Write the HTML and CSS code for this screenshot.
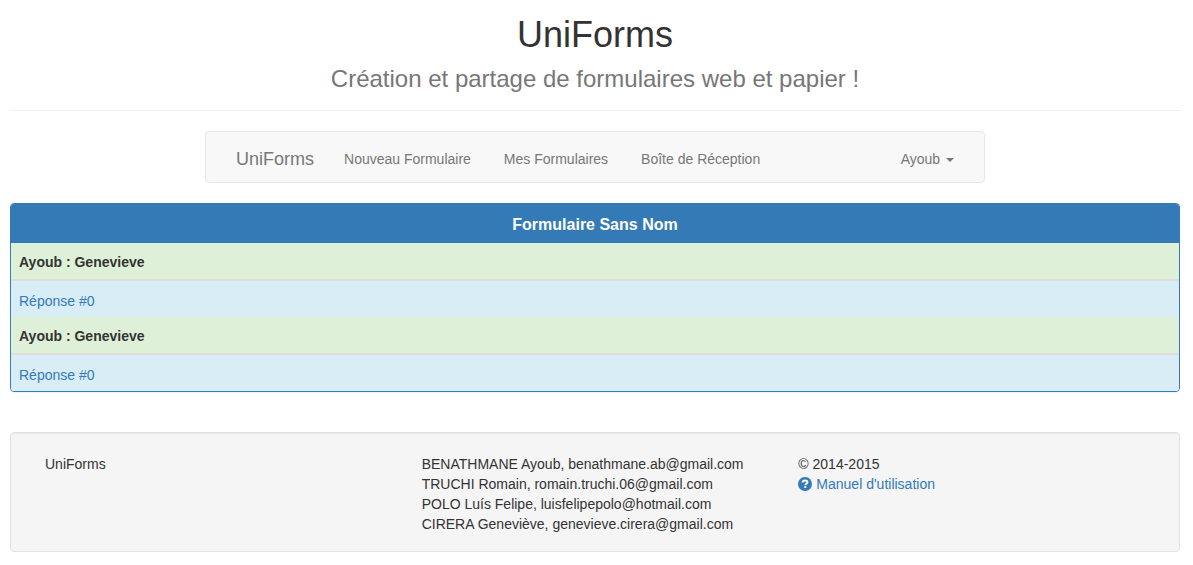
FILE: index.html
```html
<!DOCTYPE html>
<html lang="fr">
<head>
<meta charset="utf-8">
<meta name="viewport" content="width=device-width, initial-scale=1">
<title>UniForms</title>
<link rel="stylesheet" href="styles.css">
</head>
<body>
<div class="page">
  <header class="page-header">
    <h1 class="title">UniForms</h1>
    <p class="subtitle">Création et partage de formulaires web et papier !</p>
  </header>

  <nav class="navbar">
    <a class="brand" href="#">UniForms</a>
    <div class="nav-links">
      <a class="nav-link" href="#">Nouveau Formulaire</a>
      <a class="nav-link" href="#">Mes Formulaires</a>
      <a class="nav-link" href="#">Boîte de Réception</a>
    </div>
    <button class="nav-link user-menu" type="button" aria-haspopup="true">Ayoub <span class="caret"></span></button>
  </nav>

  <main class="panel">
    <h2 class="panel-heading">Formulaire Sans Nom</h2>
    <table class="answers">
      <tbody>
        <tr><th scope="rowgroup">Ayoub : Genevieve</th></tr>
        <tr><td><a href="#">Réponse #0</a></td></tr>
      </tbody>
      <tbody>
        <tr><th scope="rowgroup">Ayoub : Genevieve</th></tr>
        <tr><td><a href="#">Réponse #0</a></td></tr>
      </tbody>
    </table>
  </main>

  <footer class="footer">
    <div class="footer-col">UniForms</div>
    <ul class="footer-col">
      <li>BENATHMANE Ayoub, benathmane.ab@gmail.com</li>
      <li>TRUCHI Romain, romain.truchi.06@gmail.com</li>
      <li>POLO Luís Felipe, luisfelipepolo@hotmail.com</li>
      <li>CIRERA Geneviève, genevieve.cirera@gmail.com</li>
    </ul>
    <div class="footer-col">
      <div>© 2014-2015</div>
      <a class="manual" href="#"><svg class="icon" viewBox="0 0 14 14" aria-hidden="true"><circle cx="7" cy="7" r="7" fill="currentColor"/><path d="M4.6 5.5C4.7 3.9 5.7 3.4 7 3.4c1.400 0 2.400.7 2.400 1.900 0 1.500-2 1.400-2 2.900" fill="none" stroke="#fff" stroke-width="2"/><path d="M6.300 9.200h2v1.800h-2z" fill="#fff"/></svg>Manuel d'utilisation</a>
    </div>
  </footer>
</div>
</body>
</html>
```
FILE: styles.css
```css
* {
  box-sizing: border-box;
}

body {
  margin: 0;
  background: #fff;
  color: #333;
  font: 14px/20px "Liberation Sans", Arial, sans-serif;
}

a {
  color: #337ab7;
  text-decoration: none;
}

.page {
  padding: 15px 13px 13px 10px;
}

.page-header {
  margin-bottom: 20px;
  padding-bottom: 17px;
  border-bottom: 1px solid #eee;
  text-align: center;
}

.title {
  margin: 0 0 10px;
  font-size: 36px;
  line-height: 40px;
  font-weight: 400;
}

.subtitle {
  margin: 0;
  color: #777;
  font-size: 24px;
  line-height: 28px;
}

.navbar {
  display: flex;
  width: 66.667%;
  margin: 0 auto 20px;
  padding: 0 15px;
  background: #f8f8f8;
  border: 1px solid #e7e7e7;
  border-radius: 4px;
}

.nav-links {
  display: flex;
  gap: 3px;
}

.brand,
.nav-link {
  padding: 17px 15px 13px;
  color: #777;
}

.brand {
  font-size: 18px;
}

.user-menu {
  margin-left: auto;
  background: none;
  border: 0;
  font: inherit;
}

.caret {
  display: inline-block;
  margin-left: 2px;
  vertical-align: middle;
  border-top: 4px solid;
  border-right: 4px solid transparent;
  border-left: 4px solid transparent;
}

.panel {
  margin-bottom: 40px;
  overflow: hidden;
  border: 1px solid #337ab7;
  border-radius: 4px;
  box-shadow: 0 1px 1px rgba(0, 0, 0, 0.05);
}

.panel-heading {
  margin: 0;
  padding: 11px 15px 8px;
  background: #337ab7;
  color: #fff;
  font-size: 16px;
  line-height: 20px;
  text-align: center;
}

.answers {
  width: 100%;
  border-spacing: 0;
}

.answers th,
.answers td {
  text-align: left;
}

.answers th {
  padding: 9px 8px 7px;
  background: #dff0d8;
  border-bottom: 2px solid #ddd;
}

.answers td {
  padding: 10px 8px 6px;
  background: #d9edf7;
}

.footer {
  display: grid;
  grid-template-columns: repeat(3, 1fr);
  padding: 21px 19px 17px;
  background: #f5f5f5;
  border: 1px solid #e3e3e3;
  border-radius: 4px;
  box-shadow: inset 0 1px 1px rgba(0, 0, 0, 0.05);
}

.footer-col {
  margin: 0;
  padding: 0 15px;
  list-style: none;
}

.manual {
  display: flex;
  align-items: center;
  gap: 4px;
}

.icon {
  width: 14px;
  height: 14px;
}
```
